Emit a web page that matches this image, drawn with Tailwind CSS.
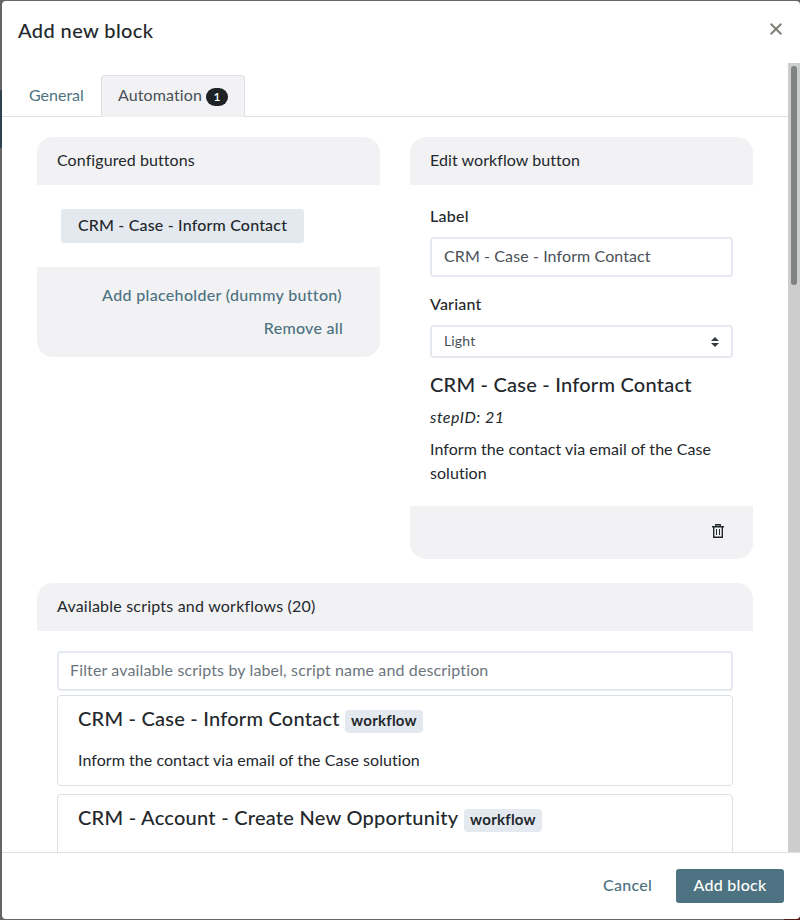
<!DOCTYPE html>
<html lang="en">
<head>
<meta charset="utf-8">
<title>Add new block</title>
<script src="https://cdn.jsdelivr.net/npm/@tailwindcss/browser@4"></script>
</head>
<body class="relative h-[920px] w-[800px] overflow-hidden bg-[#666565] pl-[2px] pt-px font-['Lato','Open_Sans',sans-serif] text-[16px] leading-6 text-[#23282c] whitespace-nowrap">
<div class="absolute left-0 top-[90px] h-[58px] w-[2px] bg-[#2f424d]"></div>
<div class="absolute bottom-0 right-0 h-[3px] w-4 bg-[#571c14]"></div>
<div class="relative flex h-[918px] w-[798px] flex-col overflow-hidden rounded-[4px] bg-white">
  <header class="flex h-[62px] shrink-0 items-start justify-between pl-4 pr-[18px] pt-[14px]">
    <h5 class="text-[20px] leading-[30px] font-medium tracking-[.4px]">Add new block</h5>
    <button class="mt-2" aria-label="Close">
      <svg class="block h-3 w-3" viewBox="0 0 12 12" fill="none" stroke="#7f7d76" stroke-width="2"><path d="M.7.7 11.3 11.3M11.3.7.7 11.3"/></svg>
    </button>
  </header>
  <div class="flex h-[789px] shrink-0">
    <main class="w-[786px] overflow-hidden">
      <nav class="flex h-[54px] items-end border-b border-[#dee2e6] pl-[10px]">
        <a class="h-[41px] w-[89px] pl-[17px] pt-2 text-[#4d7281]">General</a>
        <a class="-mb-px flex h-[42px] w-[144px] rounded-t-[4px] border border-b-0 border-[#dee2e6] bg-[#f2f2f4] pl-4 pt-[7px] text-[#495057]">
          <span class="w-[88px] tracking-[.1px]">Automation</span>
          <span class="mt-[5px] h-[18px] w-[22px] rounded-full bg-[#1e2224] text-center text-[12px] leading-[18px] font-semibold text-white">1</span>
        </a>
      </nav>
      <div class="px-[35px] pt-5">
        <div class="flex items-start gap-[30px]">
          <section class="w-[343px] overflow-hidden rounded-[16px]">
            <div class="h-12 bg-[#f2f2f4] pl-5 pt-[11px] tracking-[.08px]">Configured buttons</div>
            <div class="h-[82px] p-6">
              <button class="block h-[34px] w-[243px] rounded-[3px] bg-[#e4e9ef] pb-[2px] font-medium tracking-[.18px]">CRM - Case - Inform Contact</button>
            </div>
            <div class="flex h-[90px] flex-col items-end gap-[9px] bg-[#f2f2f4] pr-[37px] pt-4 font-medium text-[#4d7281]">
              <span class="pr-px tracking-[.33px]">Add placeholder (dummy button)</span>
              <span class="tracking-[.28px]">Remove all</span>
            </div>
          </section>
          <section class="w-[343px] overflow-hidden rounded-[16px]">
            <div class="h-12 bg-[#f2f2f4] pl-5 pt-[11px] tracking-[.06px]">Edit workflow button</div>
            <div class="h-[321px] px-5 pt-[19px]">
              <label class="block font-medium tracking-[.25px]">Label</label>
              <div class="mt-[9px] h-10 w-[303px] rounded-[4px] border-2 border-[#e4e9ef] pl-3 pt-[5px] tracking-[.1px] text-[#495057]">CRM - Case - Inform Contact</div>
              <label class="mt-[15px] block font-medium tracking-[.2px]">Variant</label>
              <div class="mt-[9px] flex h-[33px] w-[303px] items-center justify-between rounded-[4px] border-2 border-[#e4e9ef] pl-3 pr-3 text-[14px] text-[#495057]">
                <span class="pb-[2px] tracking-[.15px]">Light</span>
                <svg class="h-[10px] w-2" viewBox="0 0 8 10" fill="#343a40"><path d="M4 0 0 4h8zM4 10 0 6h8z"/></svg>
              </div>
              <h5 class="mt-[14px] text-[20px] leading-6 font-medium tracking-[.23px]">CRM - Case - Inform Contact</h5>
              <p class="mt-[9px] tracking-[.48px] italic">stepID: 21</p>
              <p class="mt-2 tracking-[.05px]">Inform the contact via email of the Case<br>solution</p>
            </div>
            <div class="flex h-[53px] justify-end bg-[#f2f2f4] pr-[29px] pt-[18px]">
              <svg class="h-[14px] w-3" viewBox="0 0 12 14" fill="none" stroke="#23282c"><path stroke-width="1.4" d="M0 2.7h12M1.7 3v10.3h8.6V3M3.8 2.5V.7h4.4v1.8"/><path d="M4.5 5v6M7.5 5v6"/></svg>
            </div>
          </section>
        </div>
        <section class="mt-6 overflow-hidden rounded-t-[16px]">
          <div class="h-12 bg-[#f2f2f4] pl-5 pt-[11px] tracking-[.21px]">Available scripts and workflows (20)</div>
          <div class="px-5 pt-5">
            <div class="h-10 rounded-[4px] border-2 border-[#e4e9ef] pl-[11px] pt-[5px] tracking-[.14px] text-[#6c757d]">Filter available scripts by label, script name and description</div>
            <article class="mt-1 h-[91px] rounded-[4px] border border-[#dcdfe2] pl-5 pt-[10px]">
              <h5 class="flex text-[20px] leading-6 font-medium"><span class="w-[267px] tracking-[.23px]">CRM - Case - Inform Contact</span><span class="mt-1 h-[23px] w-[78px] rounded-[4px] bg-[#e4e9ef] text-center text-[15px] leading-[21px] font-bold tracking-[.25px]">workflow</span></h5>
              <p class="mt-[15px] tracking-[.05px]">Inform the contact via email of the Case solution</p>
            </article>
            <article class="mt-2 h-[91px] rounded-[4px] border border-[#dcdfe2] pl-5 pt-[10px]">
              <h5 class="flex text-[20px] leading-6 font-medium"><span class="w-[386px] tracking-[.26px]">CRM - Account - Create New Opportunity</span><span class="mt-1 h-[23px] w-[78px] rounded-[4px] bg-[#e4e9ef] text-center text-[15px] leading-[21px] font-bold tracking-[.25px]">workflow</span></h5>
            </article>
          </div>
        </section>
      </div>
    </main>
    <div class="w-3 bg-[#cdcdcd] pl-[3px] pt-[3px]"><div class="h-[219px] w-[6px] rounded-full bg-[#7f8382]"></div></div>
  </div>
  <footer class="flex h-[67px] shrink-0 items-center justify-end gap-6 border-t border-[#dee2e6] pr-4 font-medium">
    <span class="pb-[2px] tracking-[.25px] text-[#4d7281]">Cancel</span>
    <button class="h-[34px] w-[108px] rounded-[3px] bg-[#4d7281] pb-[2px] tracking-[.28px] text-white">Add block</button>
  </footer>
</div>
</body>
</html>
